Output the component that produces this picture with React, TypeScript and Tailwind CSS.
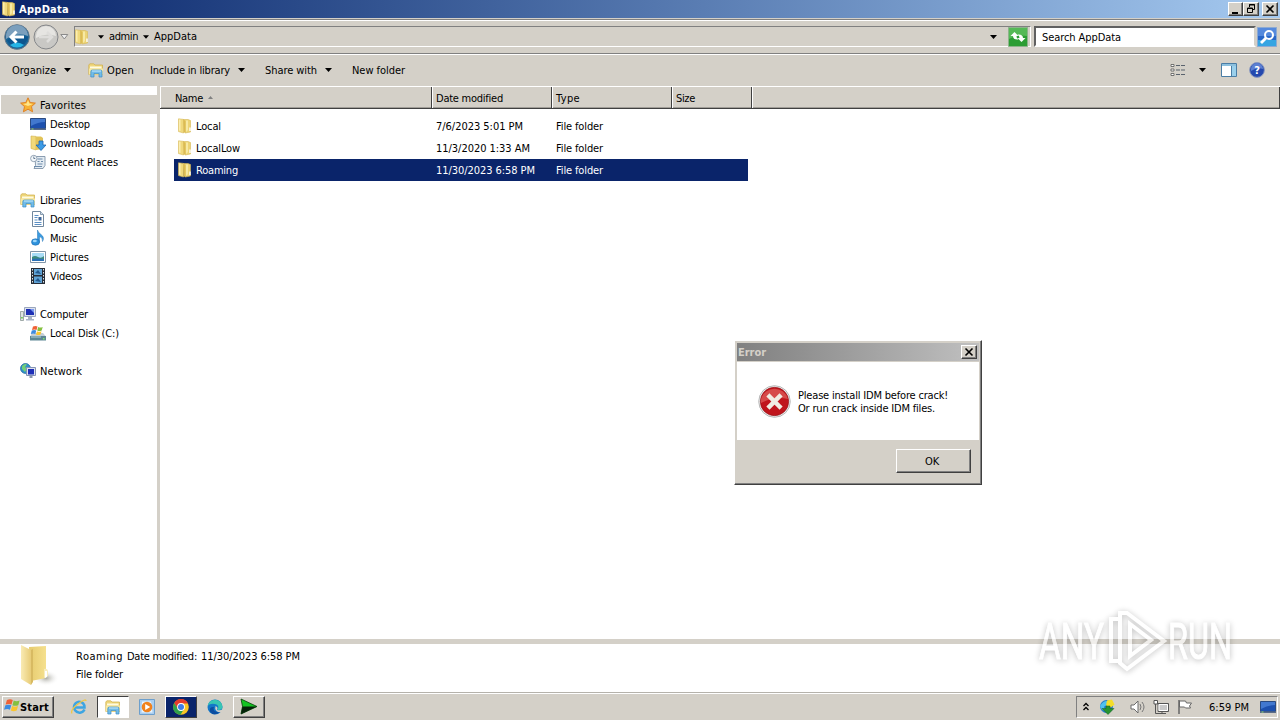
import { useLayoutEffect, useRef, type ReactNode } from 'react';

// Spreads the text over w pixels with letter spacing
function Label({ w, bold, className = '', children }: { w: number; bold?: boolean; className?: string; children: string }) {
  const ref = useRef<HTMLSpanElement>(null);

  useLayoutEffect(() => {
    const el = ref.current;
    if (!el) return;
    el.style.letterSpacing = '0px';
    const natural = el.getBoundingClientRect().width;
    el.style.letterSpacing = `${(w - natural) / children.length}px`;
  }, [w, children]);

  return (
    <span ref={ref} className={`-mb-px inline-block shrink-0 pt-px whitespace-pre ${bold ? 'font-bold' : ''} ${className}`}>{children}</span>
  );
}

function Svg({ s = 16, box = 16, className = '', children }: { s?: number; box?: number; className?: string; children: ReactNode }) {
  return <svg width={s} height={s} viewBox={`0 0 ${box} ${box}`} fill="none" className={`shrink-0 ${className}`}>{children}</svg>;
}

function Caret({ className = '' }: { className?: string }) {
  return (
    <svg width="7" height="4" viewBox="0 0 7 4" className={`shrink-0 ${className}`}>
      <path d="M0 0h7L3.5 4z" fill="#000" />
    </svg>
  );
}

function Folder() {
  return (
    <Svg>
      <path d="M6 1.500h5l2.500 1V14L8 15z" fill="#ecd476" stroke="#d6b856" strokeWidth=".6" />
      <path d="M9 2.500h2v9.500l-2 2z" fill="#f7e9a4" />
      <path d="M1.500 .8l5 .6V15l-5-1.400z" fill="#f0d97c" stroke="#d9bb5a" strokeWidth=".6" />
      <path d="M2 1.500h1.500V13L2 12.500z" fill="#fbeeb0" />
      <path d="M6.500 1.400L8.500 3v11l-2 1z" fill="#dcbb52" />
      <path d="M12.300 9.500h1.400V13h-1.400z" fill="#fff" />
    </Svg>
  );
}

function Library() {
  return (
    <Svg>
      <path d="M.8 3l1-1.200h4L7 3h7.500v9.500H.8z" fill="#efd77c" stroke="#cfae48" strokeWidth=".7" />
      <path d="M2 4.500h11.500v2H2z" fill="#fffbe0" />
      <path d="M1 6.500h14v6H1z" fill="#f9e9a0" />
      <path d="M2.800 15V9.500q0-1.500 1.500-1.500h8.200Q14 8 14 9.500V15h-3v-3.500H6V15z" fill="#72bce8" stroke="#3a8dc6" strokeWidth=".7" />
      <path d="M4 9h9" stroke="#c6e9fb" />
    </Svg>
  );
}

function Star() {
  return (
    <Svg>
      <path d="M8 .8l2.200 4.700 5.200.6-3.900 3.500 1.100 5.200L8 12.200l-4.600 2.600 1.100-5.200L.6 6.100l5.200-.6z" fill="#f8b234" stroke="#de7c1e" strokeWidth=".9" />
      <path d="M8 3l1.400 3.500 3.600.5-5 2-5-2 3.600-.5z" fill="#ffe58a" />
    </Svg>
  );
}

function DesktopIcon() {
  return (
    <Svg>
      <path d="M.5 2.500h15v10H.5z" fill="#1d50ae" stroke="#2a4a80" />
      <path d="M1 3h14v3Q8 6 1 10z" fill="#4278cf" />
      <path d="M0 12.500h16v1.500H0z" fill="#5b6c88" />
      <path d="M1.500 13h2" stroke="#8fe07a" />
    </Svg>
  );
}

function Downloads() {
  return (
    <Svg>
      <path d="M1 1l5 .4V15l-5-1.500z" fill="#f1d97a" stroke="#d2b04a" strokeWidth=".6" />
      <path d="M6 1.500h5L13 3v11l-7 1z" fill="#e2c358" />
      <path d="M9 6h4v4h3l-5 5.500L6 10h3z" fill="#3b9be6" stroke="#1f66ae" strokeWidth=".8" />
    </Svg>
  );
}

function Recent() {
  return (
    <Svg>
      <path d="M5 2.500h10v9l-2 3H4l1.500-3z" fill="#e3ebf2" stroke="#7f93a8" strokeWidth=".9" />
      <path d="M7.500 5h5M7.500 7.500h2M11 7.500h2M7.500 10h5M4 12.500h8" stroke="#6e8cab" />
      <circle cx="3.800" cy="4.500" r="3.200" fill="#f4f8fb" stroke="#8b9cae" strokeWidth=".9" />
      <path d="M3.800 2.500v2h1.500" stroke="#46607c" strokeWidth=".8" />
    </Svg>
  );
}

function Documents() {
  return (
    <Svg>
      <path d="M2.500.5h8l3 3v12h-11z" fill="#fff" stroke="#71879d" />
      <path d="M10.500.5v3h3" fill="#cfdeeb" stroke="#71879d" strokeWidth=".8" />
      <path d="M4.500 4.500h4M4.500 6.500h3M4.500 11.500h7M4.500 13.500h7" stroke="#5b8fc4" />
      <path d="M8.500 6h3v3.500h-3z" fill="#3f6699" />
      <path d="M4.500 9h3" stroke="#5b8fc4" />
    </Svg>
  );
}

function Music() {
  return (
    <Svg>
      <path d="M7.500 0q.5 2.500 3.500 4.500 4 3 1.500 7 .5-4-3-5v6h-2z" fill="#3b9be0" stroke="#2477b8" strokeWidth=".5" />
      <ellipse cx="5.500" cy="12" rx="4" ry="3.200" fill="#2f92dc" stroke="#1d6cb0" strokeWidth=".6" />
      <ellipse cx="4.800" cy="11" rx="2" ry="1.200" fill="#9cd6fa" />
    </Svg>
  );
}

function Pictures() {
  return (
    <Svg>
      <path d="M.5 2.500h15v11H.5z" fill="#fff" stroke="#8195a8" />
      <path d="M2 4h12v8H2z" fill="#a8dcf6" />
      <path d="M2 8q3-2 6 0t6-1v5H2z" fill="#3c8a7e" />
      <path d="M2 10q6-1 12 0v2H2z" fill="#2a70b6" />
    </Svg>
  );
}

function Videos() {
  return (
    <Svg>
      <path d="M1 0h14v16H1z" fill="#272d37" />
      <path d="M4 1h8v6H4zM4 8.500h8V15H4z" fill="#5fa3d6" />
      <path d="M5 5l3-3 3 4zM5 13l3-3 3 4z" fill="#24598e" />
      <path d="M2.500 1v14M13.500 1v14" stroke="#e0e6ea" strokeDasharray="1.500 1.500" />
    </Svg>
  );
}

function ComputerIcon() {
  return (
    <Svg>
      <path d="M.5 5.500h3v9h-3z" fill="#dfe5e3" stroke="#8b9795" strokeWidth=".8" />
      <path d="M1.200 11h1.500v1.500H1.200z" fill="#5bc43c" />
      <path d="M4.500 1.500h11v9h-11z" fill="#dce2ee" stroke="#9aa6bd" />
      <path d="M6 3h8v6H6z" fill="#1d2fb4" />
      <path d="M10 3h4v4z" fill="#7997ee" />
      <path d="M8 11h4v2h2v1.500H6V13h2z" fill="#a8b3c6" />
    </Svg>
  );
}

function Flag() {
  return (
    <>
      <path d="M3 1.500q2.500-1 4.500 0L6.500 5q-2-1-4.500 0z" fill="#ef6236" />
      <path d="M8.200 2q2 1 4.500 0l-1 3.500q-2.500 1-4.500 0z" fill="#84c03f" />
      <path d="M1.800 5.600q2.500-1 4.500 0L5.300 9q-2-1-4.500 0z" fill="#3c8be0" />
      <path d="M7 6.200q2 1 4.500 0l-1 3.400q-2.500 1-4.500 0z" fill="#fac52e" />
    </>
  );
}

function Disk() {
  return (
    <Svg>
      <path d="M2 8h11l3 3.500V15H0v-3.500z" fill="#c3ced6" />
      <path d="M0 11h16v4.500H0z" fill="#5d8794" />
      <path d="M1 12h10" stroke="#b2d0d8" />
      <path d="M13 13h1.500v1.500H13z" fill="#7ee66b" />
      <Flag />
    </Svg>
  );
}

function NetworkIcon() {
  return (
    <Svg>
      <circle cx="5.500" cy="5.500" r="5" fill="#2e90ca" stroke="#1d6296" strokeWidth=".7" />
      <path d="M2 3q3-3 5-1.500L5 4l2 2-2 3-3-3z" fill="#73ce78" />
      <path d="M6.500 4.500h9v8h-9z" fill="#dce2ee" stroke="#8492b4" />
      <path d="M8 6h6v5.500H8z" fill="#1e2fb8" />
      <path d="M9.500 13h3v2h-3z" fill="#8b97ad" />
    </Svg>
  );
}

function ErrorIcon() {
  return (
    <Svg s={33} box={33}>
      <circle cx="16.500" cy="16.500" r="15.800" fill="#eee" stroke="#a7a7a7" strokeWidth=".8" />
      <circle cx="16.500" cy="16.500" r="14.200" fill="#c0151c" stroke="#8d1015" strokeWidth=".6" />
      <path d="M3 14a14 14 0 0127 0Q17 11 3 18z" fill="#d64a49" />
      <path d="M11.500 11.500l10 10M21.500 11.500l-10 10" stroke="#f1ece2" strokeWidth="4.500" strokeLinecap="square" />
    </Svg>
  );
}

const raised = 'border border-t-white border-l-white border-r-[#404040] border-b-[#404040] bg-[#d4d0c8] shadow-[inset_-1px_-1px_0_#808080]';
const sunken = 'border border-t-[#808080] border-l-[#808080] border-r-white border-b-white';

const tree = [
  { name: 'Favorites', w: 46, icon: <Star />, root: true, active: true },
  { name: 'Desktop', w: 40, icon: <DesktopIcon /> },
  { name: 'Downloads', w: 53, icon: <Downloads /> },
  { name: 'Recent Places', w: 68, icon: <Recent /> },
  null,
  { name: 'Libraries', w: 41, icon: <Library />, root: true },
  { name: 'Documents', w: 54, icon: <Documents /> },
  { name: 'Music', w: 27, icon: <Music /> },
  { name: 'Pictures', w: 39, icon: <Pictures /> },
  { name: 'Videos', w: 32, icon: <Videos /> },
  null,
  { name: 'Computer', w: 48, icon: <ComputerIcon />, root: true },
  { name: 'Local Disk (C:)', w: 69, icon: <Disk /> },
  null,
  { name: 'Network', w: 42, icon: <NetworkIcon />, root: true },
];

const files = [
  { name: 'Local', w: 25, date: '7/6/2023 5:01 PM', dw: 87 },
  { name: 'LocalLow', w: 44, date: '11/3/2020 1:33 AM', dw: 94 },
  { name: 'Roaming', w: 42, date: '11/30/2023 6:58 PM', dw: 99, selected: true },
];

function TitleBar() {
  return (
    <div className="flex h-[18px] items-center bg-linear-to-r from-[#0a246a] to-[#a6caf0] pr-0.5 pl-px text-white">
      <Folder />
      <Label w={50} bold className="ml-0.5">AppData</Label>
      <div className="ml-auto flex h-[14px]">
        <div className={`w-[15px] ${raised}`}>
          <svg width="13" height="12"><path d="M3 9h6v2H3z" fill="#000" /></svg>
        </div>
        <div className={`w-4 ${raised}`}>
          <svg width="14" height="12"><path d="M5.500 4V1.500h5v5H9M5 2h6M3.500 5h5v4.500h-5zM3 5.500h6" fill="none" stroke="#000" /></svg>
        </div>
        <div className={`ml-[3px] w-4 ${raised}`}>
          <svg width="14" height="12"><path d="M3.500 2.500l7 7M10.500 2.500l-7 7" stroke="#000" strokeWidth="1.600" /></svg>
        </div>
      </div>
    </div>
  );
}

function NavBar() {
  return (
    <div className="flex h-[35px] items-center border-t border-b border-[#808080] shadow-[inset_0_1px_0_#fff,0_1px_0_#fff]">
      <Svg s={26} box={26} className="ml-1">
        <circle cx="13" cy="13" r="12.300" fill="#1a6496" stroke="#66788a" />
        <path d="M2 12a11 11 0 0122 0Q13 8 2 15z" fill="#7b9fbd" />
        <path d="M3 16q9-6 21-3a11 11 0 01-21 3z" fill="#0d568f" />
        <path d="M6 21q7-5 14 0a11 11 0 01-14 0z" fill="#25b5e6" />
        <path d="M20 13H8M12.500 7.500L7 13l5.500 5.500" stroke="#fff" strokeWidth="3" />
      </Svg>
      <Svg s={26} box={26} className="ml-[3px]">
        <circle cx="13" cy="13" r="12" fill="#c9c8c5" stroke="#85878a" />
        <path d="M3 12a10 10 0 0120 0Q13 8 3 14z" fill="#e6e5e2" />
        <path d="M6 13h12M14 8l5 5-5 5" stroke="#dedddb" strokeWidth="2.500" />
      </Svg>
      <svg width="9" height="6" className="ml-px shrink-0"><path d="M.8.5h7L4.300 5z" fill="#eee" stroke="#8a8a8a" /></svg>
      <div className={`ml-[5px] flex h-[21px] w-[957px] items-center ${sunken}`}>
        <span className="-ml-px"><Folder /></span>
        <Caret className="ml-2 w-[6px]" />
        <Label w={29} className="mb-px ml-[5px]">admin</Label>
        <Caret className="ml-[5px] w-[6px]" />
        <Label w={43} className="mb-px ml-[5px]">AppData</Label>
        <Caret className="mr-[33px] ml-auto" />
      </div>
      <Svg s={20} box={20} className="-ml-[23px]">
        <path d="M.5.5h19v19H.5z" fill="#2c9d34" stroke="#8db48b" />
        <path d="M1 1h18v8Q9 7 1 12z" fill="#55b956" />
        <path d="M2.500 9L6.500 5l4 4h-2q0 2.500 2 3.500-5.500.5-5.500-3.500zM17.500 11l-4 4-4-4h2q0-2.500-2-3.500 5.500-.5 5.500 3.500z" fill="#fff" />
      </Svg>
      <div className="ml-[6px] flex h-[21px] w-[222px] items-center border-2 border-t-[#606060] border-l-[#606060] border-r-[#d4d0c8] border-b-white bg-white pl-1.5">
        <Label w={79}>Search AppData</Label>
      </div>
      <Svg s={20} box={20} className="ml-px">
        <path d="M.5.5h19v19H.5z" fill="#2866c8" stroke="#8daad2" />
        <path d="M1 1h18v8H1z" fill="#5589dd" />
        <path d="M1 13h18v6H1z" fill="#36a5e2" />
        <circle cx="12" cy="8" r="4" stroke="#fff" strokeWidth="2" />
        <path d="M9 11l-5 5" stroke="#fff" strokeWidth="2.800" />
      </Svg>
    </div>
  );
}

function Toolbar() {
  return (
    <div className="flex h-8 items-center pl-3">
      <Label w={44}>Organize</Label>
      <Caret className="ml-2" />
      <span className="ml-[17px]"><Library /></span>
      <Label w={27} className="ml-[3px]">Open</Label>
      <Label w={80} className="ml-4">Include in library</Label>
      <Caret className="ml-2" />
      <Label w={52} className="ml-5">Share with</Label>
      <Caret className="ml-2" />
      <Label w={53} className="ml-5">New folder</Label>
      <div className="mr-[15px] ml-auto flex items-center">
        <Svg>
          <path d="M1 2.500h3v2H1zM1 7h3v2H1zM1 11.500h3v2H1z" fill="#fff" stroke="#555" strokeWidth=".8" />
          <path d="M6 3.500h4M11 3.500h4M6 8h4M11 8h4M6 12.500h4M11 12.500h4" stroke="#59626d" />
        </Svg>
        <Caret className="ml-[13px]" />
        <Svg className="ml-[15px]">
          <path d="M.5 1.500h15v13H.5z" fill="#fff" stroke="#4a7da5" />
          <path d="M1 2h14v2H1z" fill="#8cc0de" />
          <path d="M10.500 4v10" stroke="#4a7da5" />
          <path d="M11 4h4v10h-4z" fill="#9ad0ec" />
        </Svg>
        <svg width="16" height="16" viewBox="0 0 16 16" className="ml-3">
          <circle cx="8" cy="8" r="7.400" fill="#2448ae" stroke="#8c9ac0" />
          <path d="M2 7a6 6 0 0112 0Q8 5 2 9z" fill="#5d80d2" />
          <text x="8" y="12" textAnchor="middle" fill="#fff" fontSize="11" fontWeight="bold">?</text>
        </svg>
      </div>
    </div>
  );
}

function Sidebar() {
  return (
    <div className="w-[157px] shrink-0 bg-white pt-[9px]">
      {tree.map((item, i) => item ? (
        <div key={i} className={`ml-px flex h-[19px] items-center ${item.root ? 'pl-[19px]' : 'pl-[29px]'} ${item.active ? 'bg-[#d4d0c8]' : ''}`}>
          {item.icon}
          <Label w={item.w} className="ml-1">{item.name}</Label>
        </div>
      ) : <div key={i} className="h-[19px]" />)}
    </div>
  );
}

function FileList() {
  const col = 'flex h-full items-center border-r border-r-[#404040] pl-1 shadow-[inset_1px_0_0_#fff]';
  return (
    <div className="flex-1 bg-white">
      <div className="flex h-[23px] border-t border-b border-t-white border-b-[#404040] bg-[#d4d0c8] shadow-[inset_0_-1px_0_#a09d97]">
        <div className={`w-[272px] ${col}`}>
          <Label w={28} className="ml-[11px]">Name</Label>
          <svg width="5" height="3" className="mb-px ml-[5px]"><path d="M0 3L2.500 0 5 3z" fill="#808080" /></svg>
        </div>
        <div className={`w-[120px] ${col}`}><Label w={67}>Date modified</Label></div>
        <div className={`w-[120px] ${col}`}><Label w={24}>Type</Label></div>
        <div className={`w-20 ${col}`}><Label w={19}>Size</Label></div>
        <div className={`flex-1 ${col}`} />
      </div>
      <div className="mt-[6px] ml-[14px] w-[574px]">
        {files.map(f => (
          <div key={f.name} className={`flex h-[22px] items-center pl-[3px] ${f.selected ? 'bg-[#0a246a] text-white' : ''}`}>
            <Folder />
            <div className="ml-[3px] flex w-60"><Label w={f.w}>{f.name}</Label></div>
            <div className="flex w-[120px]"><Label w={f.dw}>{f.date}</Label></div>
            <Label w={47}>File folder</Label>
          </div>
        ))}
      </div>
    </div>
  );
}

function DetailsPane() {
  return (
    <div className="flex h-12 bg-white">
      <svg width="40" height="44" viewBox="0 0 40 44" className="ml-5 shrink-0">
        <defs>
          <linearGradient id="front" x1="0" x2="1"><stop stopColor="#e6cb6e" /><stop offset="1" stopColor="#f5e08e" /></linearGradient>
          <linearGradient id="cover" x1="0" x2="1"><stop stopColor="#f9ebb4" /><stop offset="1" stopColor="#e8cc78" /></linearGradient>
          <radialGradient id="shade"><stop stopColor="#a8a8a0" /><stop offset="1" stopColor="#fff" stopOpacity="0" /></radialGradient>
        </defs>
        <ellipse cx="26" cy="34" rx="13" ry="8" fill="url(#shade)" />
        <path d="M9 3l17-1v32l-15 3z" fill="url(#front)" />
        <path d="M1 1l10 5v35L1 35z" fill="url(#cover)" />
        <path d="M11 6l2-1v33l-2 3z" fill="#d8ba62" />
        <path d="M24 25q4-1 4 3v4l-4 2z" fill="#f8edbd" />
        <path d="M25 27h2v6l-2 1z" fill="#fff" />
      </svg>
      <div className="ml-4 pt-1">
        <div className="flex h-4 items-center">
          <Label w={47}>Roaming</Label>
          <Label w={70} className="ml-1">Date modified:</Label>
          <Label w={99} className="ml-1">11/30/2023 6:58 PM</Label>
        </div>
        <div className="mt-0.5 flex h-4 items-center"><Label w={47}>File folder</Label></div>
      </div>
    </div>
  );
}

function Taskbar() {
  return (
    <div className="flex h-7 items-center border-t border-[#b5b2ab] shadow-[inset_0_1px_0_#fff]">
      <div className={`ml-0.5 flex h-[22px] w-[52px] items-center ${raised}`}>
        <Svg s={17} box={13}><Flag /></Svg>
        <Label w={29} bold>Start</Label>
      </div>
      <Svg className="ml-[17px]">
        <path d="M13.500 10.500A5.500 5.500 0 118 2.700Q13.500 3 13.500 8.500H4" stroke="#3da5e2" strokeWidth="2.500" />
        <path d="M1 14.500Q-1 11 7 5T15 2" stroke="#efc746" strokeWidth="1.300" />
      </Svg>
      <div className="ml-[10px] flex h-[22px] w-8 items-center justify-center border border-t-[#404040] border-l-[#404040] border-r-white border-b-white bg-white"><Library /></div>
      <Svg className="ml-[10px]">
        <path d="M.5.5h15v15H.5z" fill="#a9cef0" stroke="#6d9fcc" />
        <path d="M3 2.500h9l1.500 11h-11z" fill="#e8f3fc" />
        <circle cx="8" cy="8" r="5.300" fill="#f0821d" />
        <path d="M6.200 5l5 3-5 3z" fill="#fff" />
      </Svg>
      <div className="ml-[10px] flex h-[22px] w-8 items-center justify-center border border-t-white border-l-white border-r-[#404040] border-b-[#404040] bg-[#0a246a]">
        <Svg>
          <circle cx="8" cy="8" r="7.800" fill="#f9c524" />
          <path d="M1.200 4A7.800 7.800 0 0115 4.500H8L4.700 10z" fill="#e33b2e" />
          <path d="M1.200 4a7.800 7.800 0 006.300 11.800L11 10H5z" fill="#2fa14c" />
          <circle cx="8" cy="8" r="3.900" fill="#fff" />
          <circle cx="8" cy="8" r="3" fill="#3e7de8" />
        </Svg>
      </div>
      <Svg className="ml-[10px]">
        <circle cx="8" cy="8" r="7.500" fill="#1477c8" />
        <path d="M.6 7A7.500 7.500 0 0115.500 8q-.5 3.500-5 3Q13 6 8 5 3 4 .6 7z" fill="#38c5b3" />
        <path d="M7 8q-2 5 6 5.500-7 4-10-1-1-5 4-4.500z" fill="#0c4da0" />
        <path d="M8.500 7q3 1 1.500 4 4 1 5.500-1v3q-4 1-6-1-2-2-1-5z" fill="#d4d0c8" />
      </Svg>
      <div className={`ml-[10px] flex h-[22px] w-8 items-center justify-center ${raised}`}>
        <svg width="18" height="17" viewBox="0 0 18 17"><path d="M1 1l16 7.500L1 16l1.500-7.500z" fill="#13c422" stroke="#073d0a" strokeWidth=".8" /><path d="M2.500 8.500H17L1 16z" fill="#06220a" /></svg>
      </div>
      <div className={`mr-0.5 ml-auto flex h-[22px] w-[202px] items-center pl-[6px] ${sunken}`}>
        <svg width="6" height="9" className="shrink-0"><path d="M.5 4L3 1.500 5.500 4M.5 8L3 5.500 5.500 8" fill="none" stroke="#000" strokeWidth="1.300" /></svg>
        <Svg className="ml-[10px]">
          <circle cx="7.500" cy="7.500" r="6.500" fill="#247dcb" />
          <path d="M1 7q3-5 7-5 1 4-2 5t2 4q-5 2-7-4z" fill="#4fc1ef" />
          <path d="M8 1.500l5-1 2.500 5-3.500 3-5-2z" fill="#f4dd2a" />
          <path d="M3 9.500h4V7h4v2.500h4L9 15.500z" fill="#279330" stroke="#155f20" strokeWidth=".5" />
        </Svg>
        <Svg className="ml-[15px]">
          <path d="M1 6h3l4-4v12l-4-4H1z" fill="#fff" stroke="#6a6a6a" />
          <path d="M10 5q2 3 0 6M12 3q4 5 0 10" stroke="#777" />
        </Svg>
        <Svg className="ml-[7px]">
          <path d="M5 4.500h10.500v8H5z" fill="#c9c9c9" stroke="#555" />
          <path d="M6 5.500h8.500v6H6z" stroke="#fff" />
          <path d="M1 1.500h3.500V5H1z" fill="#fff" stroke="#555" />
          <path d="M2.500 5v9.500H13M9 13v2" stroke="#555" />
        </Svg>
        <Svg className="ml-2">
          <path d="M2 1v14" stroke="#666" strokeWidth="1.500" />
          <path d="M2.500 2h6l1 2h5l-2 3 1 2h-5l-1-1h-5z" fill="#fff" stroke="#666" />
        </Svg>
        <Label w={40} className="ml-4">6:59 PM</Label>
        <span className="ml-[11px]"><DesktopIcon /></span>
      </div>
    </div>
  );
}

function ErrorDialog() {
  return (
    <div className={`absolute top-[340px] left-[734px] h-[145px] w-[248px] p-0.5 ${raised}`}>
      <div className="flex h-[18px] items-center bg-linear-to-r from-[#808080] to-[#c0c0c0] pr-0.5 pl-px text-[#d4d0c8]">
        <Label w={28} bold>Error</Label>
        <div className={`ml-auto h-[14px] w-4 ${raised}`}>
          <svg width="14" height="12"><path d="M3.500 2.500l7 7M10.500 2.500l-7 7" stroke="#000" strokeWidth="1.600" /></svg>
        </div>
      </div>
      <div className="mt-px flex h-[78px] items-center bg-white pl-[21px]">
        <ErrorIcon />
        <div className="ml-[7px] flex flex-col leading-[13px]">
          <Label w={150} className="self-start">Please install IDM before crack!</Label>
          <Label w={137} className="self-start">Or run crack inside IDM files.</Label>
        </div>
      </div>
      <div className="flex h-[42px] items-center justify-end pr-2">
        <div className={`flex h-6 w-[75px] items-center justify-center pr-[3px] ${raised}`}><Label w={14}>OK</Label></div>
      </div>
    </div>
  );
}

function Watermark() {
  return (
    <svg width="220" height="80" viewBox="0 0 220 80" className="absolute top-[605px] left-[1034px] overflow-visible opacity-65 drop-shadow-[0_1px_3px_rgba(0,0,0,0.4)]">
      <g fill="#fff" stroke="#fff" fontFamily="Roboto, sans-serif" fontSize="50">
        <text x="5" y="54" textLength="65" lengthAdjust="spacingAndGlyphs">ANY</text>
        <text x="134" y="54" textLength="64" lengthAdjust="spacingAndGlyphs">RUN</text>
      </g>
      <path d="M84 14h-7v42h7" fill="none" stroke="#fff" strokeWidth="4" />
      <path d="M86 8v50l7 6 37-28L93 8zM96 19v32l21-16z" fill="none" stroke="#fff" strokeWidth="4" />
    </svg>
  );
}

export default function App() {
  return (
    <div className="relative flex h-[720px] w-[1280px] flex-col overflow-hidden bg-[#d4d0c8] font-['DejaVu_Sans_Condensed','DejaVu_Sans',sans-serif] text-[11px] leading-[14px] text-black">
      <TitleBar />
      <div className="h-px" />
      <NavBar />
      <Toolbar />
      <div className="flex min-h-0 flex-1">
        <Sidebar />
        <div className="w-[3px] bg-[#d4d0c8]" />
        <FileList />
      </div>
      <div className="h-[5px] shrink-0 bg-[#d4d0c8]" />
      <DetailsPane />
      <Taskbar />
      <ErrorDialog />
      <Watermark />
    </div>
  );
}
